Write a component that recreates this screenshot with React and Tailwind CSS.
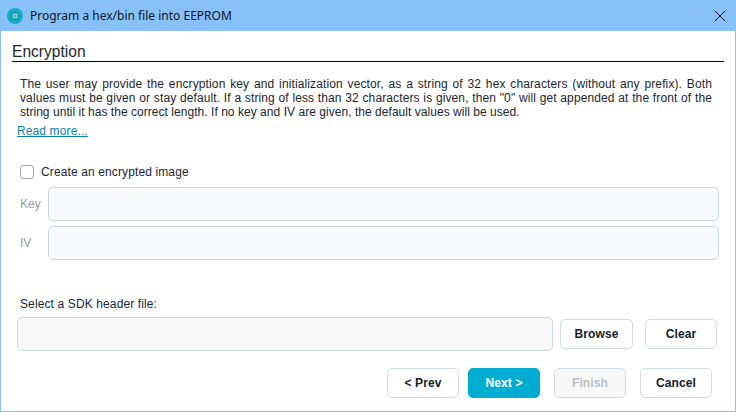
import { X } from 'lucide-react';

const Btn = ({ children, className = '' }) => (
  <button className={`h-[30px] rounded-[5px] border border-[#cfdce2] bg-white text-[12px] font-bold text-[#14202b] ${className}`}>
    {children}
  </button>
);

const Field = ({ className = '', bg = 'bg-[#f8fafc]' }) => (
  <div className={`h-[34px] rounded-[5px] border border-[#c9d8df] ${bg} ${className}`} />
);

export default function App() {
  return (
    <div className="w-[736px] h-[412px] flex flex-col overflow-hidden border-x border-b border-[#88c1f8] bg-white text-[12px] tracking-[0.12px] text-[#1c2530] font-['Liberation_Sans',Arial,sans-serif]">
      <div className="h-[31px] -mx-px flex items-center bg-[#88c1f8] pl-[7px] pr-[6px] shrink-0 tracking-normal">
        <svg width="16" height="16" viewBox="0 0 16 16">
          <circle cx="8" cy="8" r="8" fill="#12adc9" />
          <rect x="4.5" y="4.5" width="7" height="7" rx="1.5" fill="#5fc3d6" stroke="#0b7f99" />
        </svg>
        <span className="ml-[7px] font-['Noto_Sans',sans-serif] text-[12px] text-[#0b1620]">Program a hex/bin file into EEPROM</span>
        <X size={20} strokeWidth={1.1} className="ml-auto text-black" />
      </div>

      <div className="flex-1 flex flex-col pl-[11px] pr-[11px]">
        <div className="mt-[10px] h-[21px] border-b border-black text-[15.6px] leading-[21px] tracking-normal">Encryption</div>
        <p className="mt-[15px] ml-[8px] mr-[12px] text-justify leading-[14px] text-[12px]">
          The user may provide the encryption key and initialization vector, as a string of 32 hex characters (without any prefix). Both values must be given or stay default. If a string of less than 32 characters is given, then "0" will get appended at the front of the{' '}
          <span className="tracking-[0.04px]">string until it has the correct length. If no key and IV are given, the default values will be used.</span>
        </p>
        <a className="mt-[5px] ml-[5px] text-[12px] leading-[14px] text-[#0b7fa5] underline">Read more...</a>

        <label className="mt-[26px] ml-[8px] flex items-center gap-[7px] h-[16px]">
          <span className="w-[14px] h-[14px] rounded-[3px] border border-[#a8a8a8] bg-white" />
          <span>Create an encrypted image</span>
        </label>

        <div className="mt-[7px] ml-[8px] mr-[5px] flex flex-col gap-[5px] text-[#9a9a9a] tracking-normal">
          <div className="flex items-center">
            <span className="w-[28px]">Key</span>
            <Field className="flex-1" />
          </div>
          <div className="flex items-center">
            <span className="w-[28px]">IV</span>
            <Field className="flex-1" />
          </div>
        </div>

        <div className="mt-[35px] ml-[8px]">Select a SDK header file:</div>
        <div className="mt-[4px] ml-[5px] mr-[7px] flex items-center">
          <Field className="flex-1" bg="bg-[#f8f8f8]" />
          <Btn className="ml-[7px] w-[73px]">Browse</Btn>
          <Btn className="ml-[12px] w-[72px]">Clear</Btn>
        </div>

        <div className="mt-[17px] mr-[12px] flex justify-end">
          <Btn className="w-[72px]">&lt; Prev</Btn>
          <Btn className="ml-[9px] w-[72px] !border-[#00acd0] !bg-[#00acd0] !text-white">Next &gt;</Btn>
          <Btn className="ml-[14px] w-[72px] !bg-[#f7f7f7] !text-[#b9c0c6]">Finish</Btn>
          <Btn className="ml-[14px] w-[72px]">Cancel</Btn>
        </div>
      </div>
    </div>
  );
}
